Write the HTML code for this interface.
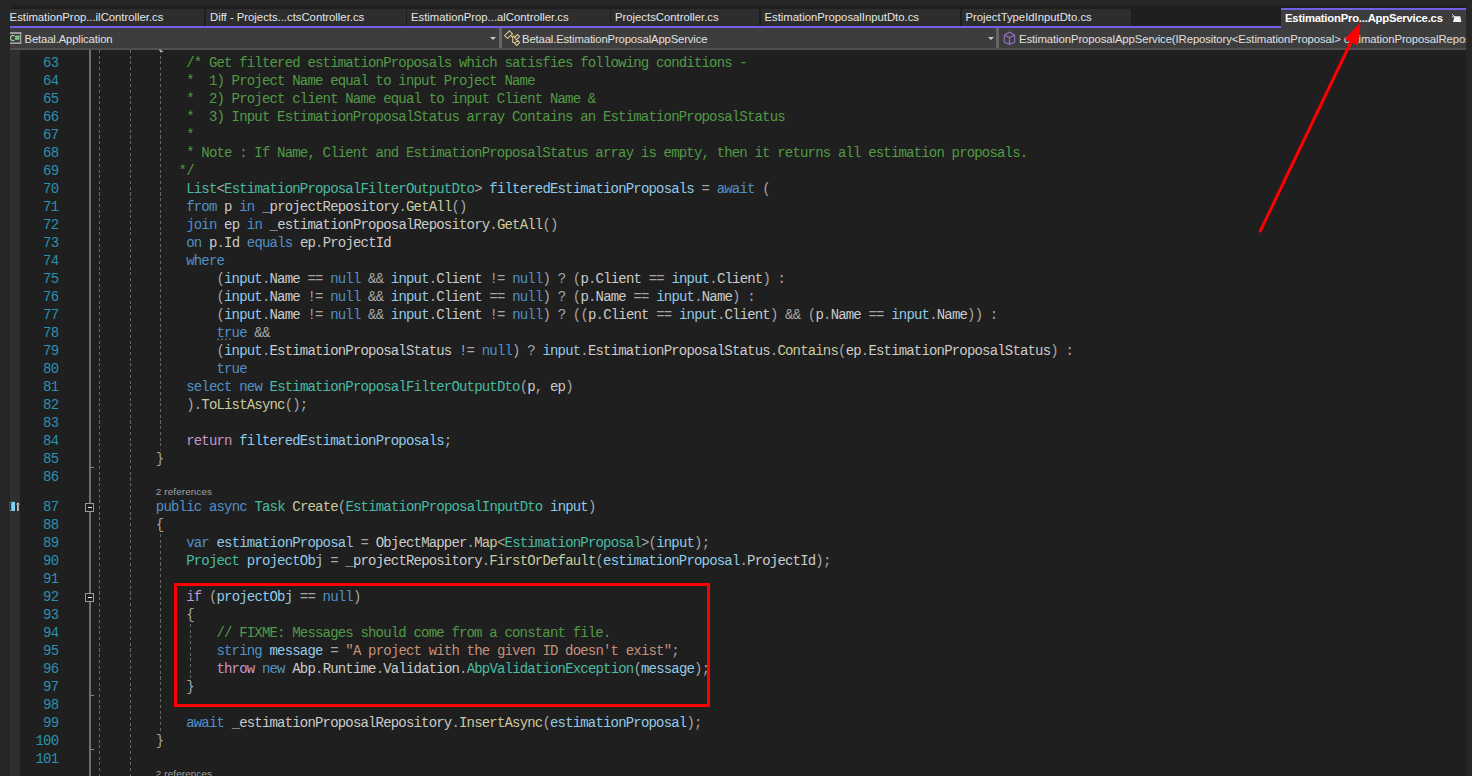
<!DOCTYPE html>
<html><head><meta charset="utf-8"><style>
html,body{margin:0;padding:0}
body{width:1472px;height:776px;overflow:hidden;position:relative;background:#262626;font-family:"Liberation Sans",sans-serif}
#ed{position:absolute;left:10px;top:50px;width:1456px;height:726px;background:#1f1f1f;overflow:hidden}
#marg{position:absolute;left:10px;top:50px;width:10px;height:726px;background:#2f2f2f}
#tabbg{position:absolute;left:10px;top:5px;width:1456px;height:23px;background:#1f1f1f}
.tab{position:absolute;top:9px;height:16.5px;background:#2d2d2d}
.tabt{position:absolute;top:10px;font-size:11.3px;line-height:15px;color:#e6e6e6;white-space:pre}
#purp{position:absolute;left:10px;top:25.5px;width:1271px;height:2.6px;background:#7160e8}
#atab{position:absolute;left:1281px;top:7.6px;width:185px;height:21px;background:#3d3d3d;border-top:2.4px solid #7160e8;box-sizing:border-box}
#atabt{position:absolute;left:1285px;top:11px;font-size:11.3px;line-height:15px;font-weight:bold;color:#fff;white-space:pre;letter-spacing:-0.21px}
#bar{position:absolute;left:10px;top:28px;width:1456px;height:20px;background:#3d3d3d}
#barb{position:absolute;left:10px;top:48px;width:1456px;height:2px;background:#505050}
.bsep{position:absolute;top:28px;width:3px;height:20px;background:#666}
.bart{position:absolute;top:31.8px;font-size:11.3px;line-height:15px;color:#e0e0e0;white-space:pre;letter-spacing:-0.14px}
.arr{position:absolute;top:36.5px;width:0;height:0;border-left:3px solid transparent;border-right:3px solid transparent;border-top:3.5px solid #c8c8c8}
.ln{opacity:0.91;position:absolute;left:95.2px;height:18px;line-height:18px;font-family:"Liberation Mono",monospace;font-size:14px;letter-spacing:-0.823px;color:#DCDCDC;white-space:pre}
.ln i{font-style:normal;color:#B4B4B4}
.ln b{font-weight:normal}
.k{color:#569CD6}
.c{color:#D8A0DF}
.t{color:#4EC9B0}
.m{color:#DCDCAA}
.v{color:#9CDCFE}
.w{color:#DCDCDC}
.p{color:#B4B4B4}
.s{color:#D69D85}
.g{color:#57A64A}
.nm{position:absolute;right:1413.75px;height:18px;line-height:18px;font-family:"Liberation Mono",monospace;font-size:14px;letter-spacing:-0.823px;color:#2B91AF;text-align:right}
.lens{position:absolute;height:13px;line-height:13px;font-size:9.8px;color:#a0a0a0;white-space:pre;letter-spacing:0.15px}
.gd{position:absolute;width:1px;background:repeating-linear-gradient(to bottom,#666 0,#666 3px,transparent 3px,transparent 5.7px)}
#outl{position:absolute;left:89px;top:50px;width:2px;height:726px;background:#6e6e6e}
.cbox{position:absolute;left:85px;width:7px;height:7px;border:1px solid #9a9a9a;background:#1f1f1f}
.cbox:after{content:"";position:absolute;left:1.5px;top:3px;width:4px;height:1px;background:#e8e8e8}
.tick{position:absolute;left:91px;width:2.5px;height:1px;background:#8a8a8a}
#rbox{position:absolute;left:174px;top:583px;width:536px;height:124px;border:3px solid #ff0000;box-sizing:border-box}
</style></head><body>
<div id="tabbg"></div>
<div class=tab style="left:10.0px;width:194.0px"></div>
<div class=tabt style="left:9.6px">EstimationProp...ilController.cs</div>
<div class=tab style="left:205.5px;width:200.0px"></div>
<div class=tabt style="left:210.0px">Diff - Projects...ctsController.cs</div>
<div class=tab style="left:407.0px;width:202.5px"></div>
<div class=tabt style="left:411.0px">EstimationProp...alController.cs</div>
<div class=tab style="left:611.0px;width:148.0px"></div>
<div class=tabt style="left:615.0px">ProjectsController.cs</div>
<div class=tab style="left:760.5px;width:199.5px"></div>
<div class=tabt style="left:764.5px">EstimationProposalInputDto.cs</div>
<div class=tab style="left:961.5px;width:169.5px"></div>
<div class=tabt style="left:965.5px">ProjectTypeIdInputDto.cs</div>
<div id="purp"></div>
<div id="bar"></div>
<div id="barb"></div>
<div id="atab"></div>
<div id="atabt">EstimationPro...AppService.cs</div>
<svg style="position:absolute;left:1450px;top:12px" width="14" height="12" viewBox="0 0 14 12"><path d="M2 2 L5 5 M2 5 L4.5 4.5" stroke="#cfcfcf" stroke-width="1"/><path d="M4.5 4.2 H10.3 L11.4 10 H3 Z" fill="#f4f4f4"/></svg>
<svg style="position:absolute;left:10px;top:32px" width="12" height="12" viewBox="0 0 12 12"><g fill="#a2a2a2"><rect x="0" y="0.1" width="11.3" height="1.8"/><rect x="0" y="10.4" width="11.3" height="1.6"/><rect x="9.9" y="0.1" width="1.4" height="11.9"/></g><path d="M4.4 4.1 A2.3 2.6 0 1 0 4.4 7.9" fill="none" stroke="#8ed88e" stroke-width="1.25"/><path d="M4.9 4.6 H9.6 M4.9 6.7 H9.6 M6.1 3.4 V8.1 M8.2 3.4 V8.1" stroke="#8ed88e" stroke-width="1.05"/></svg>
<div class="bart" style="left:24.5px">Betaal.Application</div>
<div class="arr" style="left:490.3px"></div>
<div class="bsep" style="left:499px"></div>
<svg style="position:absolute;left:500px;top:28px" width="22" height="20" viewBox="0 0 22 20"><g fill="none" stroke="#d6c28c" stroke-width="1.15" stroke-linejoin="round"><path d="M4.6 7.6 L9.5 2.9 L12.5 5.9 L7.6 10.4 Z"/><path d="M14.6 9.5 L17.5 6.5 L19.6 8.6 L16.4 11.7 Z"/><path d="M14.6 15.1 L17.7 12.4 L19.6 14.7 L16.6 17.5 Z"/><path d="M10.8 8.3 H14.8 M12.7 8.6 V14.5 H14.6"/></g></svg>
<div class="bart" style="left:522px">Betaal.EstimationProposalAppService</div>
<div class="arr" style="left:987.5px"></div>
<div class="bsep" style="left:996px"></div>
<svg style="position:absolute;left:994px;top:28px" width="22" height="20" viewBox="0 0 22 20"><g fill="none" stroke="#9170c4" stroke-width="1.15" stroke-linejoin="round"><path d="M15.5 4.1 L20.6 7.2 V13.9 L15.5 16.5 L10.3 13.9 V7.2 Z"/><path d="M10.3 7.2 L15.5 9.6 L20.6 7.2 M15.5 9.6 V16.5"/></g></svg>
<div style="position:absolute;left:1019px;top:28px;width:447px;height:20px;overflow:hidden"><div class="bart" style="left:0;top:3.8px;letter-spacing:-0.08px">EstimationProposalAppService(IRepository&lt;EstimationProposal&gt; estimationProposalRepository)</div></div>
<div id="ed"></div>
<div id="marg"></div>
<div id="outl"></div>
<div class=gd style="left:99.2px;top:50.0px;height:726.0px"></div>
<div class=gd style="left:129.5px;top:50.0px;height:726.0px"></div>
<div class=gd style="left:159.8px;top:50.0px;height:400.4px"></div>
<div class=gd style="left:159.8px;top:534.4px;height:198.0px"></div>
<div class=gd style="left:190.1px;top:624.4px;height:54.0px"></div>
<div class="cbox" style="top:503px"></div>
<svg style="position:absolute;left:9px;top:501px" width="12" height="11" viewBox="0 0 12 11"><rect x="0.8" y="0.8" width="5.2" height="9.2" fill="#7fd0f5"/><path d="M2.6 1.8 H1.6 V9 H2.6" fill="none" stroke="#111" stroke-width="0.9"/><path d="M8.9 10 V3.5" stroke="#bbb" stroke-width="1.8"/><path d="M7 3.6 L8.9 1.5 L10.8 3.6 Z" fill="#e6e6e6"/></svg>
<div class="cbox" style="top:592.9px"></div>

<div class="tick" style="top:466.9px"></div><div class="tick" style="top:694.9px"></div><div class="tick" style="top:748.9px"></div>
<div class=nm style="top:54.4px">63</div>
<div class=nm style="top:72.4px">64</div>
<div class=nm style="top:90.4px">65</div>
<div class=nm style="top:108.4px">66</div>
<div class=nm style="top:126.4px">67</div>
<div class=nm style="top:144.4px">68</div>
<div class=nm style="top:162.4px">69</div>
<div class=nm style="top:180.4px">70</div>
<div class=nm style="top:198.4px">71</div>
<div class=nm style="top:216.4px">72</div>
<div class=nm style="top:234.4px">73</div>
<div class=nm style="top:252.4px">74</div>
<div class=nm style="top:270.4px">75</div>
<div class=nm style="top:288.4px">76</div>
<div class=nm style="top:306.4px">77</div>
<div class=nm style="top:324.4px">78</div>
<div class=nm style="top:342.4px">79</div>
<div class=nm style="top:360.4px">80</div>
<div class=nm style="top:378.4px">81</div>
<div class=nm style="top:396.4px">82</div>
<div class=nm style="top:414.4px">83</div>
<div class=nm style="top:432.4px">84</div>
<div class=nm style="top:450.4px">85</div>
<div class=nm style="top:468.4px">86</div>
<div class=nm style="top:498.4px">87</div>
<div class=nm style="top:516.4px">88</div>
<div class=nm style="top:534.4px">89</div>
<div class=nm style="top:552.4px">90</div>
<div class=nm style="top:570.4px">91</div>
<div class=nm style="top:588.4px">92</div>
<div class=nm style="top:606.4px">93</div>
<div class=nm style="top:624.4px">94</div>
<div class=nm style="top:642.4px">95</div>
<div class=nm style="top:660.4px">96</div>
<div class=nm style="top:678.4px">97</div>
<div class=nm style="top:696.4px">98</div>
<div class=nm style="top:714.4px">99</div>
<div class=nm style="top:732.4px">100</div>
<div class=nm style="top:750.4px">101</div>
<div class=ln style="top:54.4px">            <b class=g>/* Get filtered estimationProposals which satisfies following conditions -</b></div>
<div class=ln style="top:72.4px">            <b class=g>*  1) Project Name equal to input Project Name</b></div>
<div class=ln style="top:90.4px">            <b class=g>*  2) Project client Name equal to input Client Name &amp;</b></div>
<div class=ln style="top:108.4px">            <b class=g>*  3) Input EstimationProposalStatus array Contains an EstimationProposalStatus</b></div>
<div class=ln style="top:126.4px">            <b class=g>*</b></div>
<div class=ln style="top:144.4px">            <b class=g>* Note : If Name, Client and EstimationProposalStatus array is empty, then it returns all estimation proposals.</b></div>
<div class=ln style="top:162.4px">           <b class=g>*/</b></div>
<div class=ln style="top:180.4px">            <b class=t>List</b><i>&lt;</i><b class=t>EstimationProposalFilterOutputDto</b><i>&gt; </i><b class=v>filteredEstimationProposals</b><i> = </i><b class=k>await</b><i> (</i></div>
<div class=ln style="top:198.4px">            <b class=k>from</b> p <b class=k>in</b> _projectRepository<i>.</i><b class=m>GetAll</b><i>()</i></div>
<div class=ln style="top:216.4px">            <b class=k>join</b> ep <b class=k>in</b> _estimationProposalRepository<i>.</i><b class=m>GetAll</b><i>()</i></div>
<div class=ln style="top:234.4px">            <b class=k>on</b> p<i>.</i>Id <b class=k>equals</b> ep<i>.</i>ProjectId</div>
<div class=ln style="top:252.4px">            <b class=k>where</b></div>
<div class=ln style="top:270.4px"><i>                (</i><b class=v>input</b><i>.</i>Name<i> == </i><b class=k>null</b><i> &amp;&amp; </i><b class=v>input</b><i>.</i>Client<i> != </i><b class=k>null</b><i>) ? (</i>p<i>.</i>Client<i> == </i><b class=v>input</b><i>.</i>Client<i>) :</i></div>
<div class=ln style="top:288.4px"><i>                (</i><b class=v>input</b><i>.</i>Name<i> != </i><b class=k>null</b><i> &amp;&amp; </i><b class=v>input</b><i>.</i>Client<i> == </i><b class=k>null</b><i>) ? (</i>p<i>.</i>Name<i> == </i><b class=v>input</b><i>.</i>Name<i>) :</i></div>
<div class=ln style="top:306.4px"><i>                (</i><b class=v>input</b><i>.</i>Name<i> != </i><b class=k>null</b><i> &amp;&amp; </i><b class=v>input</b><i>.</i>Client<i> != </i><b class=k>null</b><i>) ? ((</i>p<i>.</i>Client<i> == </i><b class=v>input</b><i>.</i>Client<i>) &amp;&amp; (</i>p<i>.</i>Name<i> == </i><b class=v>input</b><i>.</i>Name<i>)) :</i></div>
<div class=ln style="top:324.4px">                <b class=k>true</b><i> &amp;&amp;</i></div>
<div class=ln style="top:342.4px"><i>                (</i><b class=v>input</b><i>.</i>EstimationProposalStatus<i> != </i><b class=k>null</b><i>) ? </i><b class=v>input</b><i>.</i>EstimationProposalStatus<i>.</i><b class=m>Contains</b><i>(</i>ep<i>.</i>EstimationProposalStatus<i>) :</i></div>
<div class=ln style="top:360.4px">                <b class=k>true</b></div>
<div class=ln style="top:378.4px">            <b class=k>select</b> <b class=k>new</b> <b class=t>EstimationProposalFilterOutputDto</b><i>(</i>p<i>, </i>ep<i>)</i></div>
<div class=ln style="top:396.4px"><i>            ).</i><b class=m>ToListAsync</b><i>();</i></div>
<div class=ln style="top:414.4px"></div>
<div class=ln style="top:432.4px">            <b class=c>return</b> <b class=v>filteredEstimationProposals</b><i>;</i></div>
<div class=ln style="top:450.4px"><i>        }</i></div>
<div class=ln style="top:468.4px"></div>
<div class=ln style="top:498.4px">        <b class=k>public</b> <b class=k>async</b> <b class=t>Task</b> <b class=m>Create</b><i>(</i><b class=t>EstimationProposalInputDto</b> <b class=v>input</b><i>)</i></div>
<div class=ln style="top:516.4px"><i>        {</i></div>
<div class=ln style="top:534.4px">            <b class=k>var</b> <b class=v>estimationProposal</b><i> = </i>ObjectMapper<i>.</i><b class=m>Map</b><i>&lt;</i><b class=t>EstimationProposal</b><i>&gt;(</i><b class=v>input</b><i>);</i></div>
<div class=ln style="top:552.4px">            <b class=t>Project</b> <b class=v>projectObj</b><i> = </i>_projectRepository<i>.</i><b class=m>FirstOrDefault</b><i>(</i><b class=v>estimationProposal</b><i>.</i>ProjectId<i>);</i></div>
<div class=ln style="top:570.4px"></div>
<div class=ln style="top:588.4px">            <b class=c>if</b><i> (</i><b class=v>projectObj</b><i> == </i><b class=k>null</b><i>)</i></div>
<div class=ln style="top:606.4px"><i>            {</i></div>
<div class=ln style="top:624.4px">                <b class=g>// FIXME: Messages should come from a constant file.</b></div>
<div class=ln style="top:642.4px">                <b class=k>string</b> <b class=v>message</b><i> = </i><b class=s>&quot;A project with the given ID doesn&#x27;t exist&quot;</b><i>;</i></div>
<div class=ln style="top:660.4px">                <b class=c>throw</b> <b class=k>new</b> Abp<i>.</i>Runtime<i>.</i>Validation<i>.</i><b class=t>AbpValidationException</b><i>(</i><b class=v>message</b><i>);</i></div>
<div class=ln style="top:678.4px"><i>            }</i></div>
<div class=ln style="top:696.4px"></div>
<div class=ln style="top:714.4px">            <b class=k>await</b> _estimationProposalRepository<i>.</i><b class=m>InsertAsync</b><i>(</i><b class=v>estimationProposal</b><i>);</i></div>
<div class=ln style="top:732.4px"><i>        }</i></div>
<div class=ln style="top:750.4px"></div>
<div class=lens style="top:485.4px;left:155.8px">2 references</div><div class=lens style="top:767.4px;left:155.8px">2 references</div>
<div id="rbox"></div>
<svg style="position:absolute;left:216px;top:337px" width="16" height="4" viewBox="0 0 16 4"><g fill="#7a7a7a"><rect x="1.5" y="1.6" width="1.5" height="1.5"/><rect x="5.2" y="1.6" width="1.5" height="1.5"/><rect x="9.1" y="1.6" width="1.5" height="1.5"/><rect x="13" y="1.6" width="1.5" height="1.5"/></g></svg>
<svg style="position:absolute;left:156px;top:48px" width="10" height="6" viewBox="0 0 10 6"><path d="M3.5 1.8 Q5 3.5 6.8 3.6" fill="none" stroke="#c8c8c8" stroke-width="1.3"/></svg>
<svg style="position:absolute;left:0;top:0" width="1472" height="776"><line x1="1260.3" y1="231" x2="1352" y2="40" stroke="#ff0000" stroke-width="3" stroke-linecap="round"/><path d="M1360.6 22.4 L1344.4 39 L1357.9 45.6 Z" fill="#ff0000"/></svg>
</body></html>
